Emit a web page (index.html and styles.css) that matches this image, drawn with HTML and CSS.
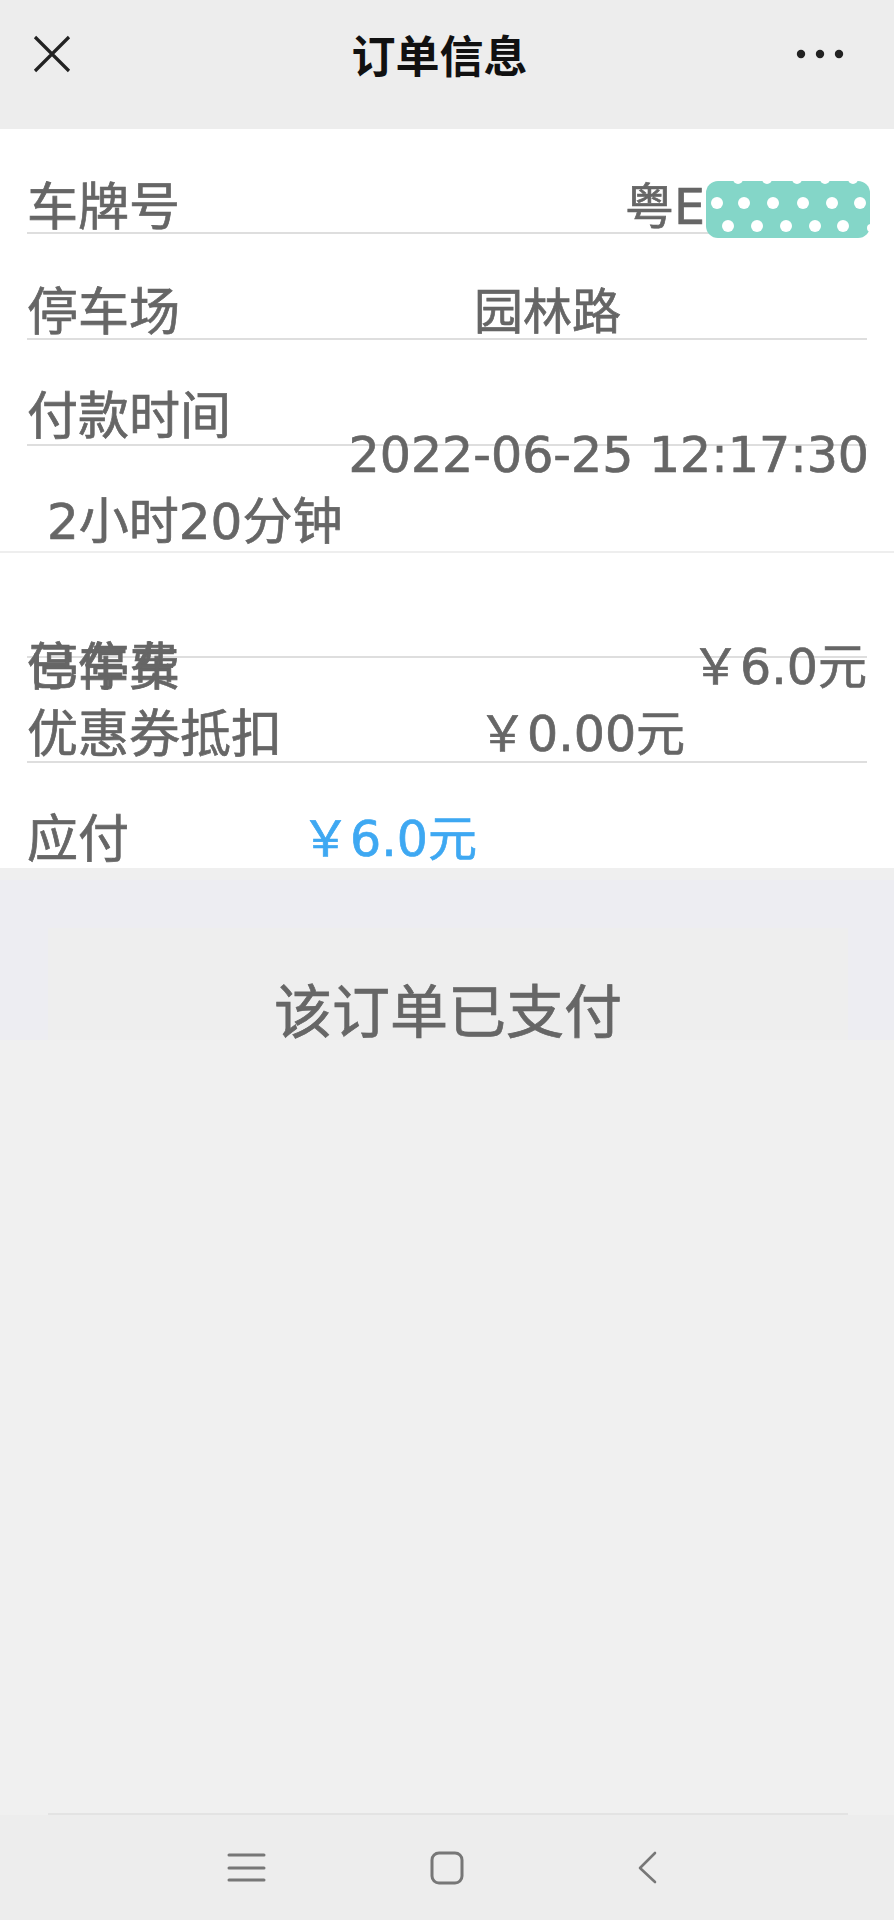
FILE: index.html
```html
<!DOCTYPE html>
<html lang="zh-CN">
<head>
  <meta charset="UTF-8">
  <meta name="viewport" content="width=device-width, initial-scale=1.0">
  <title>订单信息</title>
  <link rel="stylesheet" href="styles.css">
</head>
<body>
  <header class="topbar">
    <div class="topbar-inner">
      <svg class="icon-close" width="38" height="38" viewBox="0 0 38 38">
        <path d="M2 2 L36 36 M36 2 L2 36" stroke="#222" stroke-width="3.2" fill="none"/>
      </svg>
      <h1 class="title">订单信息</h1>
      <svg class="icon-more" width="50" height="10" viewBox="0 0 50 10">
        <circle cx="5" cy="5" r="4.2" fill="#222"/>
        <circle cx="24" cy="5" r="4.2" fill="#222"/>
        <circle cx="43" cy="5" r="4.2" fill="#222"/>
      </svg>
    </div>
  </header>

  <main class="order">
    <div class="info">
      <div class="row row-plate">
        <span class="label">车牌号</span>
        <span class="value push-right">粤E<svg class="mask" width="167" height="62" viewBox="0 0 167 62">
            <rect x="1" y="3" width="164" height="57" rx="12" fill="#84d6c8"/>
            <g fill="#fff">
              <circle cx="33" cy="1" r="5"/>
              <circle cx="62" cy="1" r="5"/>
              <circle cx="92" cy="1" r="5"/>
              <circle cx="120" cy="1" r="5"/>
              <circle cx="148" cy="1" r="5"/>
              <circle cx="166" cy="50" r="4"/>
              <circle cx="12" cy="25" r="6"/>
              <circle cx="39" cy="25" r="6"/>
              <circle cx="68" cy="25" r="6"/>
              <circle cx="98" cy="25" r="6"/>
              <circle cx="127" cy="25" r="6"/>
              <circle cx="155" cy="25" r="6"/>
              <circle cx="23" cy="48" r="6"/>
              <circle cx="52" cy="48" r="6"/>
              <circle cx="81" cy="48" r="6"/>
              <circle cx="110" cy="48" r="6"/>
              <circle cx="138" cy="48" r="6"/>
            </g>
          </svg></span>
      </div>
      <div class="row row-lot">
        <span class="label">停车场</span>
        <span class="value">园林路</span>
      </div>
      <div class="row row-paytime">
        <span class="label">付款时间</span>
      </div>
      <div class="line-date">2022-06-25 12:17:30</div>
      <div class="line-duration">2小时20分钟</div>
    </div>

    <div class="fees">
      <div class="fees-gap"></div>
      <div class="row row-fee">
        <span class="label stacked">停车费<span class="label-over">已停车</span></span>
        <span class="value push-right">￥6.0元</span>
      </div>
      <div class="row row-coupon">
        <span class="label">优惠券抵扣</span>
        <span class="value">￥0.00元</span>
      </div>
      <div class="row row-due">
        <span class="label">应付</span>
        <span class="value due">￥6.0元</span>
      </div>
    </div>
  </main>

  <section class="paid">
    <div class="paid-box">该订单已支付</div>
  </section>

  <div class="filler"></div>

  <nav class="navbar">
    <svg width="40" height="32" viewBox="0 0 40 32">
      <path d="M3 3 H38 M3 16 H38 M3 28 H38" stroke="#777" stroke-width="3" stroke-linecap="round"/>
    </svg>
    <svg width="40" height="34" viewBox="0 0 40 34">
      <rect x="5" y="2" width="30" height="30" rx="7" stroke="#777" stroke-width="3" fill="none"/>
    </svg>
    <svg width="40" height="34" viewBox="0 0 40 34">
      <path d="M27 2 L12 17 L27 31" stroke="#777" stroke-width="2.6" fill="none" stroke-linecap="round" stroke-linejoin="round"/>
    </svg>
  </nav>
</body>
</html>
```

FILE: styles.css
```css
body {
  margin: 0;
  padding: 0;
  background-color: #efefef;
  font-family: "DejaVu Sans", "Noto Sans CJK SC", sans-serif;
  color: #666;
  min-height: 1920px;
  display: flex;
  flex-direction: column;
}
.topbar {
  background-color: #ededed;
  padding-bottom: 21px;
}
.topbar-inner {
  height: 108px;
  display: grid;
  grid-template-columns: 1fr auto 1fr;
  align-items: center;
  padding: 0 48px 0 33px;
}
.icon-more {
  justify-self: end;
}
.title {
  margin: 0;
  font-family: "Noto Sans CJK SC", sans-serif;
  font-size: 44px;
  font-weight: bold;
  color: #111;
  line-height: 1;
}
.order {
  background-color: #fff;
  -webkit-text-stroke: 0.7px currentColor;
}
.info {
  padding: 0 27px;
  border-bottom: 2px solid #eeeeee;
}
.row {
  display: flex;
  font-size: 49px;
  line-height: 49px;
  height: 49px;
  white-space: nowrap;
}
.label {
  font-size: 51px;
  line-height: 49px;
}
.push-right {
  margin-left: auto;
}
.row-plate {
  padding-top: 54px;
  border-bottom: 2px solid #dedede;
}
.mask {
  display: inline-block;
  vertical-align: top;
  margin: -5px -5px -8px 0;
}
.row-lot {
  padding: 54px 0 1px;
  border-bottom: 2px solid #dedede;
}
.row-lot .value {
  margin-left: 294px;
}
.row-paytime {
  padding: 52px 0 3px;
  border-bottom: 2px solid #dedede;
}
.line-date {
  font-size: 49px;
  line-height: 49px;
  height: 49px;
  text-align: right;
  margin-top: -15px;
  margin-right: -2px;
}
.line-duration {
  font-size: 50px;
  line-height: 49px;
  height: 49px;
  margin-top: 18px;
  padding: 0 0 4px 20px;
}
.fees {
  padding: 0 27px 4px;
}
.fees-gap {
  height: 103px;
  border-bottom: 2px solid #dedede;
}
.row-fee {
  margin-top: -15px;
}
.stacked {
  position: relative;
}
.label-over {
  position: absolute;
  left: 0;
  top: 0;
}
.row-coupon {
  margin-top: 18px;
  padding-bottom: 2px;
  border-bottom: 2px solid #dedede;
}
.row-coupon .value {
  margin-left: 196px;
}
.row-due {
  padding-top: 52px;
}
.row-due .value {
  margin-left: 172px;
}
.due {
  color: #3ea8f2;
}
.paid {
  margin-top: 12px;
  background-color: #ededf2;
  padding: 48px 46px 0 48px;
}
.paid-box {
  background-color: #eeeeee;
  height: 112px;
  box-sizing: border-box;
  padding-top: 51px;
  text-align: center;
  font-family: "Noto Sans CJK SC", sans-serif;
  font-size: 58px;
  line-height: 58px;
  color: #666;
  -webkit-text-stroke: 0.7px currentColor;
}
.filler {
  flex: 1;
  background-color: #f0f0f0;
  border-bottom: 2px solid #e3e3e3;
  margin: 0 46px 0 48px;
  box-shadow: -48px 0 0 #f0f0f0, 46px 0 0 #f0f0f0;
}
.navbar {
  height: 105px;
  background-color: #ededed;
  display: flex;
  justify-content: center;
  align-items: center;
  gap: 161px;
}
```
